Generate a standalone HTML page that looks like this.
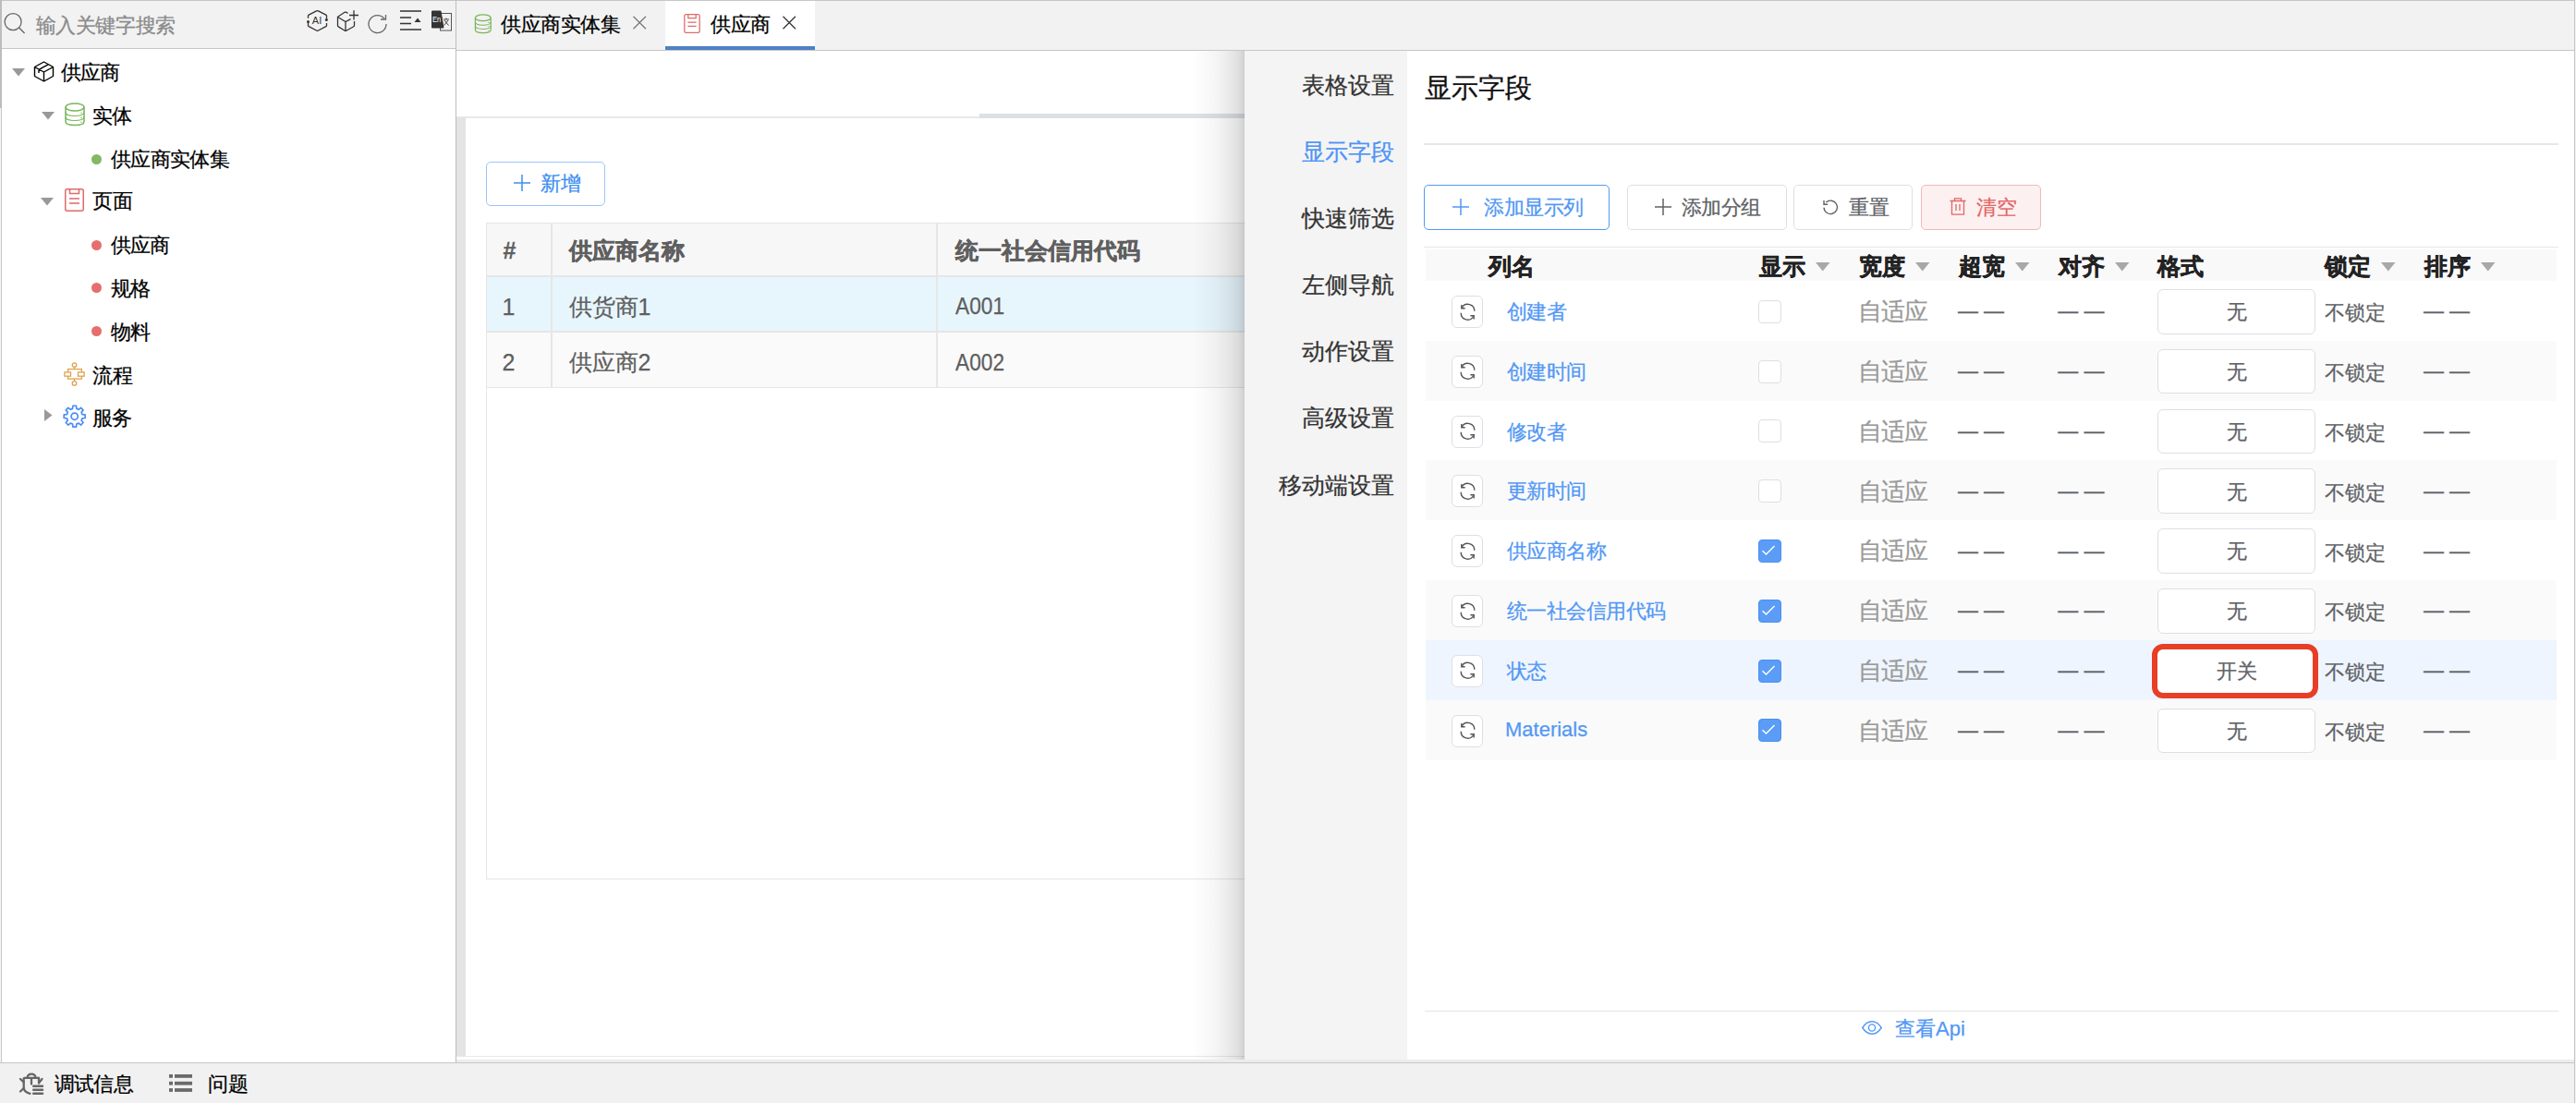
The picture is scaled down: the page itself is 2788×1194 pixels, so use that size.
<!DOCTYPE html><html><head><meta charset="utf-8"><style>
html,body{margin:0;padding:0;width:2788px;height:1194px;overflow:hidden;background:#fff;position:relative;font-family:"Liberation Sans",sans-serif}
.t{position:absolute;white-space:nowrap;line-height:1;-webkit-text-stroke:0.25px currentColor}
.r{position:absolute;box-sizing:border-box}
.i{position:absolute;overflow:visible}
</style></head><body>
<div class="r" style="left:0px;top:0px;width:2788px;height:1194px;background:#fff"></div>
<div class="r" style="left:0px;top:0px;width:493px;height:53px;background:#f2f2f2"></div>
<div class="r" style="left:0px;top:52px;width:493px;height:1px;background:#c6c6c6"></div>
<div class="r" style="left:494px;top:0px;width:2294px;height:55px;background:#f2f2f2"></div>
<div class="r" style="left:494px;top:54px;width:2294px;height:1px;background:#c6c6c6"></div>
<div class="r" style="left:0px;top:0px;width:2788px;height:1px;background:#c6c6c6"></div>
<div class="r" style="left:0px;top:0px;width:1px;height:1194px;background:#f4f4f4"></div>
<div class="r" style="left:1px;top:0px;width:1px;height:1194px;background:#c8c8c8"></div>
<div class="r" style="left:0px;top:0px;width:2px;height:117px;background:#bdbdbd"></div>
<div class="r" style="left:493px;top:0px;width:1px;height:1150px;background:#bdbdbd"></div>
<div class="r" style="left:0px;top:1150px;width:2788px;height:44px;background:#f1f1f1"></div>
<div class="r" style="left:0px;top:1150px;width:2788px;height:1px;background:#c6c6c6"></div>
<svg class="i" style="left:0px;top:0px;" width="40" height="52" viewBox="0 0 40 52"><circle cx="14.1" cy="23.6" r="9" fill="none" stroke="#666" stroke-width="1.3"/><line x1="20.6" y1="30" x2="26.6" y2="36" stroke="#666" stroke-width="1.3"/></svg>
<div class="t" style="left:38.5px;top:16.6px;font-size:22px;color:#8a8a8a;font-weight:400;letter-spacing:-0.35px">输入关键字搜索</div>
<svg class="i" style="left:332px;top:11px;" width="23" height="23" viewBox="0 0 23 23"><path d="M1.5 8.8 V6 Q1.5 5.5 2.2 5.1 L11 0.7 Q11.5 0.4 12 0.7 L20.8 5.1 Q21.5 5.5 21.5 6 V10.4 M21.5 14 V16.8 Q21.5 17.3 20.8 17.7 L12 22.2 Q11.5 22.5 11 22.2 L2.2 17.7 Q1.5 17.3 1.5 16.8 V12.5" fill="none" stroke="#333" stroke-width="1.3"/><circle cx="1.5" cy="12.5" r="1.5" fill="#333"/><circle cx="21.3" cy="10.4" r="1.5" fill="#333"/><text x="11" y="15.2" font-size="11" text-anchor="middle" fill="#333" font-family="Liberation Sans">AI</text></svg>
<svg class="i" style="left:365px;top:11px;" width="23" height="23" viewBox="0 0 23 23"><path d="M11.5 3.5 L10 2.3 Q9 1.8 8 2.3 L0.5 7.3 V16.8 Q0.5 17.5 1.2 17.9 L8.3 22.2 Q9 22.6 9.7 22.2 L17.8 17.7 Q18.5 17.3 18.5 16.5 V12" fill="none" stroke="#333" stroke-width="1.3"/><path d="M0.7 7.5 L9 12.6 L14.5 9.6 M9 12.6 V22.4" fill="none" stroke="#333" stroke-width="1.3"/><path d="M18 0.2 V10.5 M13 5.5 H23" stroke="#333" stroke-width="1.3"/></svg>
<svg class="i" style="left:398px;top:14.5px;" width="22" height="22" viewBox="0 0 22 22"><path d="M20 11 A9.5 9.5 0 1 1 18 5.2" fill="none" stroke="#666" stroke-width="1.3"/><path d="M19.5 1 V6 H14" fill="none" stroke="#666" stroke-width="1.3"/></svg>
<svg class="i" style="left:433px;top:11px;" width="23" height="22" viewBox="0 0 23 22"><path d="M0 1 H23 M0 8 H12 M0 14.5 H12 M0 21 H23" stroke="#333" stroke-width="1.4"/><path d="M15.5 13 L19 8.5 L22.5 13 Z" fill="#333"/></svg>
<svg class="i" style="left:466px;top:11px;" width="23" height="23" viewBox="0 0 23 23"><rect x="10.5" y="3.5" width="12" height="18.5" fill="#f2f2f2" stroke="#555" stroke-width="1"/><path d="M1.5 1 H11 L14 19 H1.5 Z" fill="#333" stroke="#333" stroke-width="1" stroke-linejoin="round"/><text x="6.6" y="13.2" font-size="9" fill="#fff" text-anchor="middle" font-family="Liberation Sans" transform="translate(6.6 0) scale(0.85 1) translate(-6.6 0)">En</text><path d="M14 10 H20 M17 8.5 V10 M15 11 L19.5 16.5 M19 11 L14.5 16.5" stroke="#333" stroke-width="0.9"/></svg>
<svg class="i" style="left:12.5px;top:74px;" width="14" height="9" viewBox="0 0 14 9"><path d="M0 0 H14 L7 8.5 Z" fill="#999"/></svg>
<svg class="i" style="left:36px;top:66px;" width="23" height="23" viewBox="0 0 23 23"><path d="M11.5 1 L21.5 6.5 V16.5 L11.5 22 L1.5 16.5 V6.5 Z M1.5 6.5 L11.5 12 L21.5 6.5 M11.5 12 V22 M6.5 9.2 L16.5 3.7 M6 9 V13" fill="none" stroke="#000" stroke-width="1.4" stroke-linejoin="round"/></svg>
<div class="t" style="left:65.7px;top:67.5px;font-size:22px;color:#000;font-weight:400;letter-spacing:-0.6px">供应商</div>
<svg class="i" style="left:44.5px;top:121px;" width="14" height="9" viewBox="0 0 14 9"><path d="M0 0 H14 L7 8.5 Z" fill="#999"/></svg>
<svg class="i" style="left:69.5px;top:111px;" width="22" height="25" viewBox="0 0 22 25"><ellipse cx="11" cy="5" rx="10" ry="4" fill="none" stroke="#7ab55c" stroke-width="1.5"/><path d="M1 5 V20.5 C1 23 5.5 24.5 11 24.5 C16.5 24.5 21 23 21 20.5 V5" fill="none" stroke="#7ab55c" stroke-width="1.5"/><path d="M1 10.5 C1 13 5.5 14.5 11 14.5 C16.5 14.5 21 13 21 10.5 M1 15.5 C1 18 5.5 19.5 11 19.5 C16.5 19.5 21 18 21 15.5" fill="none" stroke="#7ab55c" stroke-width="1.2"/><circle cx="18" cy="11.2" r="0.7" fill="#7ab55c"/><circle cx="18" cy="16.2" r="0.7" fill="#7ab55c"/><circle cx="18" cy="21.2" r="0.7" fill="#7ab55c"/></svg>
<div class="t" style="left:100px;top:114.8px;font-size:22px;color:#000;font-weight:400;letter-spacing:-0.6px">实体</div>
<div class="r" style="left:98.9px;top:166.5px;width:11px;height:11px;background:#82b866;border-radius:50%"></div>
<div class="t" style="left:119.8px;top:161.6px;font-size:22px;color:#000;font-weight:400;letter-spacing:-0.6px">供应商实体集</div>
<svg class="i" style="left:44px;top:214px;" width="14" height="9" viewBox="0 0 14 9"><path d="M0 0 H14 L7 8.5 Z" fill="#999"/></svg>
<svg class="i" style="left:70px;top:204px;" width="21" height="25" viewBox="0 0 21 25"><rect x="0.75" y="0.75" width="19.5" height="23.5" rx="2" fill="none" stroke="#e06a6a" stroke-width="1.5"/><path d="M5.5 1 V5.5 H15.5 V1" fill="none" stroke="#e06a6a" stroke-width="1.5"/><path d="M5 11 H16 M5 16 H16" stroke="#e06a6a" stroke-width="1.5"/></svg>
<div class="t" style="left:100.3px;top:207px;font-size:22px;color:#000;font-weight:400;letter-spacing:-0.6px">页面</div>
<div class="r" style="left:98.7px;top:259.5px;width:11px;height:11px;background:#e56f6f;border-radius:50%"></div>
<div class="t" style="left:119.7px;top:255.0px;font-size:22px;color:#000;font-weight:400;letter-spacing:-0.6px">供应商</div>
<div class="r" style="left:98.7px;top:306.4px;width:11px;height:11px;background:#e56f6f;border-radius:50%"></div>
<div class="t" style="left:119.7px;top:301.9px;font-size:22px;color:#000;font-weight:400;letter-spacing:-0.6px">规格</div>
<div class="r" style="left:98.7px;top:353.3px;width:11px;height:11px;background:#e56f6f;border-radius:50%"></div>
<div class="t" style="left:119.7px;top:348.8px;font-size:22px;color:#000;font-weight:400;letter-spacing:-0.6px">物料</div>
<svg class="i" style="left:69px;top:391.5px;" width="23" height="26" viewBox="0 0 23 26"><g fill="none" stroke="#dfa24c" stroke-width="1.3"><circle cx="11.5" cy="3.1" r="2.3"/><circle cx="11.5" cy="22.9" r="2.3"/><path d="M11.5 5.4 V7.6 M11.5 18.1 V20.6"/><rect x="4.6" y="7.6" width="14.8" height="10.5"/><rect x="0.9" y="10.9" width="6.6" height="4.3" fill="#fff"/><rect x="15.5" y="10.9" width="6.6" height="4.3" fill="#fff"/></g></svg>
<div class="t" style="left:100.3px;top:395.5px;font-size:22px;color:#000;font-weight:400;letter-spacing:-0.6px">流程</div>
<svg class="i" style="left:47.5px;top:443px;" width="9" height="13" viewBox="0 0 9 13"><path d="M0 0 V13 L8.5 6.5 Z" fill="#999"/></svg>
<svg class="i" style="left:67.6px;top:437.6px;" width="25.4" height="25.4" viewBox="0 0 25.4 25.4"><path d="M10.89 1.24 L14.51 1.24 L14.84 4.37 L17.08 5.30 L19.52 3.32 L22.08 5.88 L20.10 8.32 L21.03 10.56 L24.16 10.89 L24.16 14.51 L21.03 14.84 L20.10 17.08 L22.08 19.52 L19.52 22.08 L17.08 20.10 L14.84 21.03 L14.51 24.16 L10.89 24.16 L10.56 21.03 L8.32 20.10 L5.88 22.08 L3.32 19.52 L5.30 17.08 L4.37 14.84 L1.24 14.51 L1.24 10.89 L4.37 10.56 L5.30 8.32 L3.32 5.88 L5.88 3.32 L8.32 5.30 L10.56 4.37 Z" fill="none" stroke="#4a8ef2" stroke-width="1.7" stroke-linejoin="round"/><circle cx="12.7" cy="12.7" r="3.6" fill="none" stroke="#4a8ef2" stroke-width="1.7"/></svg>
<div class="t" style="left:100px;top:442.3px;font-size:22px;color:#000;font-weight:400;letter-spacing:-0.6px">服务</div>
<svg class="i" style="left:512.8px;top:15px;" width="19.6" height="21" viewBox="0 0 22 25"><ellipse cx="11" cy="5" rx="10" ry="4" fill="none" stroke="#7ab55c" stroke-width="1.5"/><path d="M1 5 V20.5 C1 23 5.5 24.5 11 24.5 C16.5 24.5 21 23 21 20.5 V5" fill="none" stroke="#7ab55c" stroke-width="1.5"/><path d="M1 10.5 C1 13 5.5 14.5 11 14.5 C16.5 14.5 21 13 21 10.5 M1 15.5 C1 18 5.5 19.5 11 19.5 C16.5 19.5 21 18 21 15.5" fill="none" stroke="#7ab55c" stroke-width="1.2"/><circle cx="18" cy="11.2" r="0.7" fill="#7ab55c"/><circle cx="18" cy="16.2" r="0.7" fill="#7ab55c"/><circle cx="18" cy="21.2" r="0.7" fill="#7ab55c"/></svg>
<div class="t" style="left:542px;top:15.5px;font-size:22px;color:#000;font-weight:400;letter-spacing:-0.45px">供应商实体集</div>
<svg class="i" style="left:685px;top:17px;" width="14.5" height="15" viewBox="0 0 14 14"><path d="M0.5 0.5 L13.5 13.5 M13.5 0.5 L0.5 13.5" stroke="#777" stroke-width="1.2"/></svg>
<div class="r" style="left:720px;top:1px;width:162px;height:53px;background:#fff"></div>
<div class="r" style="left:720px;top:50px;width:162px;height:4px;background:#4e80c4"></div>
<svg class="i" style="left:740px;top:15px;" width="18" height="21" viewBox="0 0 21 25"><rect x="0.75" y="0.75" width="19.5" height="23.5" rx="2" fill="none" stroke="#e06a6a" stroke-width="1.5"/><path d="M5.5 1 V5.5 H15.5 V1" fill="none" stroke="#e06a6a" stroke-width="1.5"/><path d="M5 11 H16 M5 16 H16" stroke="#e06a6a" stroke-width="1.5"/></svg>
<div class="t" style="left:769.2px;top:15.5px;font-size:22px;color:#000;font-weight:400;letter-spacing:-0.6px">供应商</div>
<svg class="i" style="left:846.7px;top:17px;" width="14.5" height="15" viewBox="0 0 14 14"><path d="M0.5 0.5 L13.5 13.5 M13.5 0.5 L0.5 13.5" stroke="#333" stroke-width="1.2"/></svg>
<div class="r" style="left:494px;top:126px;width:853px;height:1.5px;background:#ebe8e8"></div>
<div class="r" style="left:1060px;top:123px;width:287px;height:5px;background:#dde0e5"></div>
<div class="r" style="left:494px;top:127px;width:10px;height:1016px;background:#e4e4e4"></div>
<div class="r" style="left:494px;top:1143px;width:853px;height:1px;background:#e8e8e8"></div>
<div class="r" style="left:494px;top:1147px;width:853px;height:3px;background:#ececec"></div>
<div class="r" style="left:526px;top:175px;width:129px;height:47.5px;border:1px solid #9cc5f8;border-radius:5px;background:#fff"></div>
<svg class="i" style="left:556px;top:189px;" width="18" height="18" viewBox="0 0 18 18"><path d="M9 0 V18 M0 9 H18" stroke="#3d8ef0" stroke-width="1.5"/></svg>
<div class="t" style="left:585px;top:187.6px;font-size:22px;color:#3d8ef0;font-weight:400;">新增</div>
<div class="r" style="left:526px;top:241px;width:821px;height:711px;border-left:1px solid #e6e6e6;border-top:1px solid #e6e6e6;border-bottom:1px solid #e6e6e6"></div>
<div class="r" style="left:527px;top:242px;width:820px;height:56px;background:#f7f7f7"></div>
<div class="r" style="left:527px;top:298px;width:820px;height:1.5px;background:#e6e6e6"></div>
<div class="r" style="left:527px;top:299.5px;width:820px;height:58.5px;background:#e7f6fd"></div>
<div class="r" style="left:527px;top:358px;width:820px;height:1.5px;background:#e6e6e6"></div>
<div class="r" style="left:527px;top:359.5px;width:820px;height:59px;background:#fafafa"></div>
<div class="r" style="left:527px;top:418.5px;width:820px;height:1.5px;background:#e6e6e6"></div>
<div class="r" style="left:595.5px;top:242px;width:2px;height:177px;background:#e6e6e6"></div>
<div class="r" style="left:1012.5px;top:242px;width:2px;height:177px;background:#e6e6e6"></div>
<div class="t" style="left:544.4px;top:258.5px;font-size:25px;color:#5f5f5f;font-weight:700;-webkit-text-stroke:0.3px #5f5f5f">#</div>
<div class="t" style="left:615.8px;top:259px;font-size:25px;color:#5f5f5f;font-weight:700;-webkit-text-stroke:0.5px #5f5f5f">供应商名称</div>
<div class="t" style="left:1033.5px;top:259px;font-size:25px;color:#5f5f5f;font-weight:700;-webkit-text-stroke:0.5px #5f5f5f">统一社会信用代码</div>
<div class="t" style="left:543.5px;top:320px;font-size:25px;color:#5f5f5f;font-weight:400;">1</div>
<div class="t" style="left:615.6px;top:319.6px;font-size:25px;color:#5f5f5f;font-weight:400;">供货商1</div>
<div class="t" style="left:1033.5px;top:319.3px;font-size:25px;color:#5f5f5f;font-weight:400;transform:scaleX(0.91);transform-origin:0 0">A001</div>
<div class="t" style="left:543.5px;top:380.2px;font-size:25px;color:#5f5f5f;font-weight:400;">2</div>
<div class="t" style="left:615.6px;top:379.6px;font-size:25px;color:#5f5f5f;font-weight:400;">供应商2</div>
<div class="t" style="left:1033.5px;top:379.8px;font-size:25px;color:#5f5f5f;font-weight:400;transform:scaleX(0.91);transform-origin:0 0">A002</div>
<div class="r" style="left:1287px;top:55px;width:60px;height:1092px;background:linear-gradient(to right,rgba(0,0,0,0) 0%,rgba(0,0,0,0.004) 9.5%,rgba(0,0,0,0.035) 45%,rgba(0,0,0,0.07) 66.5%,rgba(0,0,0,0.12) 88%,rgba(0,0,0,0.19) 100%)"></div>
<div class="r" style="left:1347px;top:55px;width:1439px;height:1092px;background:#fff"></div>
<div class="r" style="left:1347px;top:55px;width:176px;height:1092px;background:#f4f4f4"></div>
<div class="t" style="right:1279px;top:80.2px;font-size:25px;color:#333">表格设置</div>
<div class="t" style="right:1279px;top:152.25px;font-size:25px;color:#4d94f5">显示字段</div>
<div class="t" style="right:1279px;top:224.3px;font-size:25px;color:#333">快速筛选</div>
<div class="t" style="right:1279px;top:296.34999999999997px;font-size:25px;color:#333">左侧导航</div>
<div class="t" style="right:1279px;top:368.4px;font-size:25px;color:#333">动作设置</div>
<div class="t" style="right:1279px;top:440.45px;font-size:25px;color:#333">高级设置</div>
<div class="t" style="right:1279px;top:512.5px;font-size:25px;color:#333">移动端设置</div>
<div class="t" style="left:1541.8px;top:80.5px;font-size:29px;color:#111;font-weight:400;">显示字段</div>
<div class="r" style="left:1541px;top:154.5px;width:1228px;height:2px;background:#e4e7ed"></div>
<div class="r" style="left:1541px;top:200px;width:201px;height:48.6px;border:1.5px solid #5298f5;border-radius:5px"></div>
<svg class="i" style="left:1572px;top:215px;" width="18" height="18" viewBox="0 0 18 18"><path d="M9 0 V18 M0 9 H18" stroke="#5298f5" stroke-width="1.5"/></svg>
<div class="t" style="left:1606px;top:214px;font-size:22px;color:#5298f5;font-weight:400;letter-spacing:-0.45px">添加显示列</div>
<div class="r" style="left:1761px;top:200px;width:172.5px;height:48.6px;border:1px solid #dcdfe6;border-radius:5px"></div>
<svg class="i" style="left:1791px;top:215px;" width="18" height="18" viewBox="0 0 18 18"><path d="M9 0 V18 M0 9 H18" stroke="#606266" stroke-width="1.5"/></svg>
<div class="t" style="left:1820px;top:214px;font-size:22px;color:#606266;font-weight:400;letter-spacing:-0.75px">添加分组</div>
<div class="r" style="left:1941.4px;top:200px;width:129px;height:48.6px;border:1px solid #dcdfe6;border-radius:5px"></div>
<svg class="i" style="left:1972.5px;top:215.5px;" width="16.5" height="16.5" viewBox="0 0 16 16"><path d="M3.2 3 A7 7 0 1 1 1 8.5" fill="none" stroke="#606266" stroke-width="1.4"/><path d="M1 1 V5 H5" fill="none" stroke="#606266" stroke-width="1.4"/></svg>
<div class="t" style="left:2000.6px;top:214px;font-size:22px;color:#606266;font-weight:400;">重置</div>
<div class="r" style="left:2079px;top:200px;width:129.5px;height:48.6px;border:1px solid #f2b8b8;border-radius:5px;background:#fcf0f0"></div>
<svg class="i" style="left:2109.5px;top:214px;" width="18" height="19" viewBox="0 0 18 19"><path d="M0.5 3.5 H17.5 M5.5 3.5 V0.8 H12.5 V3.5 M2.5 3.5 V18.2 H15.5 V3.5 M7 7 V14 M11 7 V14" fill="none" stroke="#e36565" stroke-width="1.3"/></svg>
<div class="t" style="left:2138.5px;top:214px;font-size:22px;color:#e36565;font-weight:400;">清空</div>
<div class="r" style="left:1541px;top:267px;width:1228px;height:1px;background:#e4e7ed"></div>
<div class="r" style="left:1543px;top:269.5px;width:1224px;height:34.5px;background:#f9f9fa"></div>
<div class="t" style="left:1610.5px;top:276.2px;font-size:25px;color:#222;font-weight:700;-webkit-text-stroke:0.5px #222">列名</div>
<div class="t" style="left:1904.2px;top:276.2px;font-size:25px;color:#222;font-weight:700;-webkit-text-stroke:0.5px #222">显示</div>
<svg class="i" style="left:1965.2px;top:284.2px;" width="15.5" height="9.5" viewBox="0 0 15.5 9.5"><path d="M0 0 H15.5 L7.75 9.5 Z" fill="#a8a8a8"/></svg>
<div class="t" style="left:2011.7px;top:276.2px;font-size:25px;color:#222;font-weight:700;-webkit-text-stroke:0.5px #222">宽度</div>
<svg class="i" style="left:2072.7px;top:284.2px;" width="15.5" height="9.5" viewBox="0 0 15.5 9.5"><path d="M0 0 H15.5 L7.75 9.5 Z" fill="#a8a8a8"/></svg>
<div class="t" style="left:2119.8px;top:276.2px;font-size:25px;color:#222;font-weight:700;-webkit-text-stroke:0.5px #222">超宽</div>
<svg class="i" style="left:2180.8px;top:284.2px;" width="15.5" height="9.5" viewBox="0 0 15.5 9.5"><path d="M0 0 H15.5 L7.75 9.5 Z" fill="#a8a8a8"/></svg>
<div class="t" style="left:2228px;top:276.2px;font-size:25px;color:#222;font-weight:700;-webkit-text-stroke:0.5px #222">对齐</div>
<svg class="i" style="left:2289px;top:284.2px;" width="15.5" height="9.5" viewBox="0 0 15.5 9.5"><path d="M0 0 H15.5 L7.75 9.5 Z" fill="#a8a8a8"/></svg>
<div class="t" style="left:2335.4px;top:276.2px;font-size:25px;color:#222;font-weight:700;-webkit-text-stroke:0.5px #222">格式</div>
<div class="t" style="left:2515.5px;top:276.2px;font-size:25px;color:#222;font-weight:700;-webkit-text-stroke:0.5px #222">锁定</div>
<svg class="i" style="left:2576.5px;top:284.2px;" width="15.5" height="9.5" viewBox="0 0 15.5 9.5"><path d="M0 0 H15.5 L7.75 9.5 Z" fill="#a8a8a8"/></svg>
<div class="t" style="left:2623.6px;top:276.2px;font-size:25px;color:#222;font-weight:700;-webkit-text-stroke:0.5px #222">排序</div>
<svg class="i" style="left:2684.6px;top:284.2px;" width="15.5" height="9.5" viewBox="0 0 15.5 9.5"><path d="M0 0 H15.5 L7.75 9.5 Z" fill="#a8a8a8"/></svg>
<div class="r" style="left:1543px;top:304.0px;width:1224px;height:65.3px;background:#fff"></div>
<div class="r" style="left:1571px;top:319.9px;width:34px;height:35px;border:1px solid #dcdfe6;border-radius:6px;background:#fff"></div>
<svg class="i" style="left:1579.5px;top:328.5px;" width="17" height="17.5" viewBox="0 0 17 17.5"><path d="M2.2 4 A7.3 7.3 0 0 1 15.8 7.8" fill="none" stroke="#555" stroke-width="1.4"/><path d="M14.8 13.5 A7.3 7.3 0 0 1 1.2 9.7" fill="none" stroke="#555" stroke-width="1.4"/><path d="M1.8 1 V4.8 H5.6" fill="none" stroke="#555" stroke-width="1.4"/><path d="M15.2 16.5 V12.7 H11.4" fill="none" stroke="#555" stroke-width="1.4"/></svg>
<div class="t" style="left:1630.6px;top:326.9px;font-size:22px;color:#5298f5;font-weight:400;letter-spacing:-0.45px">创建者</div>
<div class="r" style="left:1903px;top:324.7px;width:25px;height:25px;background:#fff;border:1px solid #dcdfe6;border-radius:4px"></div>
<div class="t" style="left:2010.5px;top:325.2px;font-size:25.5px;color:#9a9a9a;font-weight:400;letter-spacing:-0.8px">自适应</div>
<div class="t" style="left:2119px;top:326.4px;font-size:22px;color:#606266;font-weight:400;">— —</div>
<div class="t" style="left:2227.3px;top:326.4px;font-size:22px;color:#606266;font-weight:400;">— —</div>
<div class="t" style="left:2623px;top:326.4px;font-size:22px;color:#606266;font-weight:400;">— —</div>
<div class="r" style="left:2335.4px;top:312.9px;width:170.2px;height:48.7px;border:1px solid #dcdfe6;border-radius:6px;background:#fff"></div>
<div class="t" style="left:2410px;top:327.2px;font-size:22px;color:#606266;font-weight:400;">无</div>
<div class="t" style="left:2515.5px;top:328.4px;font-size:22px;color:#606266;font-weight:400;">不锁定</div>
<div class="r" style="left:1543px;top:368.8px;width:1224px;height:65.3px;background:#fafafa"></div>
<div class="r" style="left:1571px;top:384.7px;width:34px;height:35px;border:1px solid #dcdfe6;border-radius:6px;background:#fff"></div>
<svg class="i" style="left:1579.5px;top:393.3px;" width="17" height="17.5" viewBox="0 0 17 17.5"><path d="M2.2 4 A7.3 7.3 0 0 1 15.8 7.8" fill="none" stroke="#555" stroke-width="1.4"/><path d="M14.8 13.5 A7.3 7.3 0 0 1 1.2 9.7" fill="none" stroke="#555" stroke-width="1.4"/><path d="M1.8 1 V4.8 H5.6" fill="none" stroke="#555" stroke-width="1.4"/><path d="M15.2 16.5 V12.7 H11.4" fill="none" stroke="#555" stroke-width="1.4"/></svg>
<div class="t" style="left:1630.6px;top:391.7px;font-size:22px;color:#5298f5;font-weight:400;letter-spacing:-0.45px">创建时间</div>
<div class="r" style="left:1903px;top:389.5px;width:25px;height:25px;background:#fff;border:1px solid #dcdfe6;border-radius:4px"></div>
<div class="t" style="left:2010.5px;top:390.0px;font-size:25.5px;color:#9a9a9a;font-weight:400;letter-spacing:-0.8px">自适应</div>
<div class="t" style="left:2119px;top:391.2px;font-size:22px;color:#606266;font-weight:400;">— —</div>
<div class="t" style="left:2227.3px;top:391.2px;font-size:22px;color:#606266;font-weight:400;">— —</div>
<div class="t" style="left:2623px;top:391.2px;font-size:22px;color:#606266;font-weight:400;">— —</div>
<div class="r" style="left:2335.4px;top:377.7px;width:170.2px;height:48.7px;border:1px solid #dcdfe6;border-radius:6px;background:#fff"></div>
<div class="t" style="left:2410px;top:392.0px;font-size:22px;color:#606266;font-weight:400;">无</div>
<div class="t" style="left:2515.5px;top:393.2px;font-size:22px;color:#606266;font-weight:400;">不锁定</div>
<div class="r" style="left:1543px;top:433.6px;width:1224px;height:65.3px;background:#fff"></div>
<div class="r" style="left:1571px;top:449.5px;width:34px;height:35px;border:1px solid #dcdfe6;border-radius:6px;background:#fff"></div>
<svg class="i" style="left:1579.5px;top:458.1px;" width="17" height="17.5" viewBox="0 0 17 17.5"><path d="M2.2 4 A7.3 7.3 0 0 1 15.8 7.8" fill="none" stroke="#555" stroke-width="1.4"/><path d="M14.8 13.5 A7.3 7.3 0 0 1 1.2 9.7" fill="none" stroke="#555" stroke-width="1.4"/><path d="M1.8 1 V4.8 H5.6" fill="none" stroke="#555" stroke-width="1.4"/><path d="M15.2 16.5 V12.7 H11.4" fill="none" stroke="#555" stroke-width="1.4"/></svg>
<div class="t" style="left:1630.6px;top:456.5px;font-size:22px;color:#5298f5;font-weight:400;letter-spacing:-0.45px">修改者</div>
<div class="r" style="left:1903px;top:454.3px;width:25px;height:25px;background:#fff;border:1px solid #dcdfe6;border-radius:4px"></div>
<div class="t" style="left:2010.5px;top:454.8px;font-size:25.5px;color:#9a9a9a;font-weight:400;letter-spacing:-0.8px">自适应</div>
<div class="t" style="left:2119px;top:456.0px;font-size:22px;color:#606266;font-weight:400;">— —</div>
<div class="t" style="left:2227.3px;top:456.0px;font-size:22px;color:#606266;font-weight:400;">— —</div>
<div class="t" style="left:2623px;top:456.0px;font-size:22px;color:#606266;font-weight:400;">— —</div>
<div class="r" style="left:2335.4px;top:442.5px;width:170.2px;height:48.7px;border:1px solid #dcdfe6;border-radius:6px;background:#fff"></div>
<div class="t" style="left:2410px;top:456.8px;font-size:22px;color:#606266;font-weight:400;">无</div>
<div class="t" style="left:2515.5px;top:458.0px;font-size:22px;color:#606266;font-weight:400;">不锁定</div>
<div class="r" style="left:1543px;top:498.4px;width:1224px;height:65.3px;background:#fafafa"></div>
<div class="r" style="left:1571px;top:514.3px;width:34px;height:35px;border:1px solid #dcdfe6;border-radius:6px;background:#fff"></div>
<svg class="i" style="left:1579.5px;top:522.8999999999999px;" width="17" height="17.5" viewBox="0 0 17 17.5"><path d="M2.2 4 A7.3 7.3 0 0 1 15.8 7.8" fill="none" stroke="#555" stroke-width="1.4"/><path d="M14.8 13.5 A7.3 7.3 0 0 1 1.2 9.7" fill="none" stroke="#555" stroke-width="1.4"/><path d="M1.8 1 V4.8 H5.6" fill="none" stroke="#555" stroke-width="1.4"/><path d="M15.2 16.5 V12.7 H11.4" fill="none" stroke="#555" stroke-width="1.4"/></svg>
<div class="t" style="left:1630.6px;top:521.3px;font-size:22px;color:#5298f5;font-weight:400;letter-spacing:-0.45px">更新时间</div>
<div class="r" style="left:1903px;top:519.0999999999999px;width:25px;height:25px;background:#fff;border:1px solid #dcdfe6;border-radius:4px"></div>
<div class="t" style="left:2010.5px;top:519.5999999999999px;font-size:25.5px;color:#9a9a9a;font-weight:400;letter-spacing:-0.8px">自适应</div>
<div class="t" style="left:2119px;top:520.8px;font-size:22px;color:#606266;font-weight:400;">— —</div>
<div class="t" style="left:2227.3px;top:520.8px;font-size:22px;color:#606266;font-weight:400;">— —</div>
<div class="t" style="left:2623px;top:520.8px;font-size:22px;color:#606266;font-weight:400;">— —</div>
<div class="r" style="left:2335.4px;top:507.2999999999999px;width:170.2px;height:48.7px;border:1px solid #dcdfe6;border-radius:6px;background:#fff"></div>
<div class="t" style="left:2410px;top:521.5999999999999px;font-size:22px;color:#606266;font-weight:400;">无</div>
<div class="t" style="left:2515.5px;top:522.8px;font-size:22px;color:#606266;font-weight:400;">不锁定</div>
<div class="r" style="left:1543px;top:563.2px;width:1224px;height:65.3px;background:#fff"></div>
<div class="r" style="left:1571px;top:579.1px;width:34px;height:35px;border:1px solid #dcdfe6;border-radius:6px;background:#fff"></div>
<svg class="i" style="left:1579.5px;top:587.6999999999999px;" width="17" height="17.5" viewBox="0 0 17 17.5"><path d="M2.2 4 A7.3 7.3 0 0 1 15.8 7.8" fill="none" stroke="#555" stroke-width="1.4"/><path d="M14.8 13.5 A7.3 7.3 0 0 1 1.2 9.7" fill="none" stroke="#555" stroke-width="1.4"/><path d="M1.8 1 V4.8 H5.6" fill="none" stroke="#555" stroke-width="1.4"/><path d="M15.2 16.5 V12.7 H11.4" fill="none" stroke="#555" stroke-width="1.4"/></svg>
<div class="t" style="left:1630.6px;top:586.1px;font-size:22px;color:#5298f5;font-weight:400;letter-spacing:-0.45px">供应商名称</div>
<div class="r" style="left:1903px;top:583.9px;width:25px;height:25px;background:#5b9cf6;border:1px solid #4a90f2;border-radius:4px"></div>
<svg class="i" style="left:1903px;top:583.9px;" width="25" height="25" viewBox="0 0 25 25"><path d="M4.5 12.2 L8.5 16 L17.5 7" fill="none" stroke="#fff" stroke-width="1.4"/></svg>
<div class="t" style="left:2010.5px;top:584.4px;font-size:25.5px;color:#9a9a9a;font-weight:400;letter-spacing:-0.8px">自适应</div>
<div class="t" style="left:2119px;top:585.6px;font-size:22px;color:#606266;font-weight:400;">— —</div>
<div class="t" style="left:2227.3px;top:585.6px;font-size:22px;color:#606266;font-weight:400;">— —</div>
<div class="t" style="left:2623px;top:585.6px;font-size:22px;color:#606266;font-weight:400;">— —</div>
<div class="r" style="left:2335.4px;top:572.1px;width:170.2px;height:48.7px;border:1px solid #dcdfe6;border-radius:6px;background:#fff"></div>
<div class="t" style="left:2410px;top:586.4px;font-size:22px;color:#606266;font-weight:400;">无</div>
<div class="t" style="left:2515.5px;top:587.6px;font-size:22px;color:#606266;font-weight:400;">不锁定</div>
<div class="r" style="left:1543px;top:628.0px;width:1224px;height:65.3px;background:#fafafa"></div>
<div class="r" style="left:1571px;top:643.9px;width:34px;height:35px;border:1px solid #dcdfe6;border-radius:6px;background:#fff"></div>
<svg class="i" style="left:1579.5px;top:652.4999999999999px;" width="17" height="17.5" viewBox="0 0 17 17.5"><path d="M2.2 4 A7.3 7.3 0 0 1 15.8 7.8" fill="none" stroke="#555" stroke-width="1.4"/><path d="M14.8 13.5 A7.3 7.3 0 0 1 1.2 9.7" fill="none" stroke="#555" stroke-width="1.4"/><path d="M1.8 1 V4.8 H5.6" fill="none" stroke="#555" stroke-width="1.4"/><path d="M15.2 16.5 V12.7 H11.4" fill="none" stroke="#555" stroke-width="1.4"/></svg>
<div class="t" style="left:1630.6px;top:650.9px;font-size:22px;color:#5298f5;font-weight:400;letter-spacing:-0.45px">统一社会信用代码</div>
<div class="r" style="left:1903px;top:648.6999999999999px;width:25px;height:25px;background:#5b9cf6;border:1px solid #4a90f2;border-radius:4px"></div>
<svg class="i" style="left:1903px;top:648.6999999999999px;" width="25" height="25" viewBox="0 0 25 25"><path d="M4.5 12.2 L8.5 16 L17.5 7" fill="none" stroke="#fff" stroke-width="1.4"/></svg>
<div class="t" style="left:2010.5px;top:649.1999999999999px;font-size:25.5px;color:#9a9a9a;font-weight:400;letter-spacing:-0.8px">自适应</div>
<div class="t" style="left:2119px;top:650.4px;font-size:22px;color:#606266;font-weight:400;">— —</div>
<div class="t" style="left:2227.3px;top:650.4px;font-size:22px;color:#606266;font-weight:400;">— —</div>
<div class="t" style="left:2623px;top:650.4px;font-size:22px;color:#606266;font-weight:400;">— —</div>
<div class="r" style="left:2335.4px;top:636.9px;width:170.2px;height:48.7px;border:1px solid #dcdfe6;border-radius:6px;background:#fff"></div>
<div class="t" style="left:2410px;top:651.1999999999999px;font-size:22px;color:#606266;font-weight:400;">无</div>
<div class="t" style="left:2515.5px;top:652.4px;font-size:22px;color:#606266;font-weight:400;">不锁定</div>
<div class="r" style="left:1543px;top:692.8px;width:1224px;height:65.3px;background:#eef5fe"></div>
<div class="r" style="left:1571px;top:708.6999999999999px;width:34px;height:35px;border:1px solid #dcdfe6;border-radius:6px;background:#fff"></div>
<svg class="i" style="left:1579.5px;top:717.2999999999998px;" width="17" height="17.5" viewBox="0 0 17 17.5"><path d="M2.2 4 A7.3 7.3 0 0 1 15.8 7.8" fill="none" stroke="#555" stroke-width="1.4"/><path d="M14.8 13.5 A7.3 7.3 0 0 1 1.2 9.7" fill="none" stroke="#555" stroke-width="1.4"/><path d="M1.8 1 V4.8 H5.6" fill="none" stroke="#555" stroke-width="1.4"/><path d="M15.2 16.5 V12.7 H11.4" fill="none" stroke="#555" stroke-width="1.4"/></svg>
<div class="t" style="left:1630.6px;top:715.6999999999999px;font-size:22px;color:#5298f5;font-weight:400;letter-spacing:-0.45px">状态</div>
<div class="r" style="left:1903px;top:713.4999999999999px;width:25px;height:25px;background:#5b9cf6;border:1px solid #4a90f2;border-radius:4px"></div>
<svg class="i" style="left:1903px;top:713.4999999999999px;" width="25" height="25" viewBox="0 0 25 25"><path d="M4.5 12.2 L8.5 16 L17.5 7" fill="none" stroke="#fff" stroke-width="1.4"/></svg>
<div class="t" style="left:2010.5px;top:713.9999999999999px;font-size:25.5px;color:#9a9a9a;font-weight:400;letter-spacing:-0.8px">自适应</div>
<div class="t" style="left:2119px;top:715.1999999999999px;font-size:22px;color:#606266;font-weight:400;">— —</div>
<div class="t" style="left:2227.3px;top:715.1999999999999px;font-size:22px;color:#606266;font-weight:400;">— —</div>
<div class="t" style="left:2623px;top:715.1999999999999px;font-size:22px;color:#606266;font-weight:400;">— —</div>
<div class="r" style="left:2329.3px;top:696.4999999999999px;width:180px;height:59.5px;border:6px solid #e83e26;border-radius:12px;background:#fff"></div>
<div class="t" style="left:2399.3px;top:715.6999999999999px;font-size:22px;color:#606266;font-weight:400;">开关</div>
<div class="t" style="left:2515.5px;top:717.1999999999999px;font-size:22px;color:#606266;font-weight:400;">不锁定</div>
<div class="r" style="left:1543px;top:757.5999999999999px;width:1224px;height:65.3px;background:#fafafa"></div>
<div class="r" style="left:1571px;top:773.4999999999999px;width:34px;height:35px;border:1px solid #dcdfe6;border-radius:6px;background:#fff"></div>
<svg class="i" style="left:1579.5px;top:782.0999999999998px;" width="17" height="17.5" viewBox="0 0 17 17.5"><path d="M2.2 4 A7.3 7.3 0 0 1 15.8 7.8" fill="none" stroke="#555" stroke-width="1.4"/><path d="M14.8 13.5 A7.3 7.3 0 0 1 1.2 9.7" fill="none" stroke="#555" stroke-width="1.4"/><path d="M1.8 1 V4.8 H5.6" fill="none" stroke="#555" stroke-width="1.4"/><path d="M15.2 16.5 V12.7 H11.4" fill="none" stroke="#555" stroke-width="1.4"/></svg>
<div class="t" style="left:1629px;top:779.2999999999998px;font-size:22px;color:#5298f5;font-weight:400;">Materials</div>
<div class="r" style="left:1903px;top:778.2999999999998px;width:25px;height:25px;background:#5b9cf6;border:1px solid #4a90f2;border-radius:4px"></div>
<svg class="i" style="left:1903px;top:778.2999999999998px;" width="25" height="25" viewBox="0 0 25 25"><path d="M4.5 12.2 L8.5 16 L17.5 7" fill="none" stroke="#fff" stroke-width="1.4"/></svg>
<div class="t" style="left:2010.5px;top:778.7999999999998px;font-size:25.5px;color:#9a9a9a;font-weight:400;letter-spacing:-0.8px">自适应</div>
<div class="t" style="left:2119px;top:779.9999999999999px;font-size:22px;color:#606266;font-weight:400;">— —</div>
<div class="t" style="left:2227.3px;top:779.9999999999999px;font-size:22px;color:#606266;font-weight:400;">— —</div>
<div class="t" style="left:2623px;top:779.9999999999999px;font-size:22px;color:#606266;font-weight:400;">— —</div>
<div class="r" style="left:2335.4px;top:766.4999999999999px;width:170.2px;height:48.7px;border:1px solid #dcdfe6;border-radius:6px;background:#fff"></div>
<div class="t" style="left:2410px;top:780.7999999999998px;font-size:22px;color:#606266;font-weight:400;">无</div>
<div class="t" style="left:2515.5px;top:781.9999999999999px;font-size:22px;color:#606266;font-weight:400;">不锁定</div>
<div class="r" style="left:1541.5px;top:1094px;width:1227.5px;height:1px;background:#e4e4e4"></div>
<svg class="i" style="left:2014.5px;top:1105px;" width="22" height="15" viewBox="0 0 22 15"><path d="M0.8 7.5 C4 2.5 7.5 0.8 11 0.8 C14.5 0.8 18 2.5 21.2 7.5 C18 12.5 14.5 14.2 11 14.2 C7.5 14.2 4 12.5 0.8 7.5 Z" fill="none" stroke="#5298f5" stroke-width="1.4"/><circle cx="11" cy="7.5" r="3.6" fill="none" stroke="#5298f5" stroke-width="1.4"/></svg>
<div class="t" style="left:2051px;top:1102.5px;font-size:22px;color:#5298f5;font-weight:400;">查看Api</div>
<svg class="i" style="left:15px;top:1155px;" width="40" height="35" viewBox="0 0 40 35"><g fill="none" stroke="#666" stroke-width="2.3" stroke-linecap="round"><path d="M14.5 11.5 A4.6 4.6 0 0 1 23.6 11.5"/><path d="M11.5 11.8 H27"/><path d="M7 13 L10.7 16.5"/><path d="M10.7 12.5 V22 C10.7 25.5 13 27.8 17.5 28.8"/><path d="M7 26.5 L10.7 23"/><path d="M30.5 13 L27.3 17"/><path d="M27 12 V17.5"/><path d="M19 12.5 V18.5"/></g><path d="M21.3 20.7 H31 M21.3 24.7 H31 M21.3 28.7 H31" stroke="#666" stroke-width="2.6" stroke-linecap="round"/></svg>
<div class="t" style="left:58.7px;top:1163px;font-size:22px;color:#000;font-weight:400;letter-spacing:-0.6px">调试信息</div>
<svg class="i" style="left:178px;top:1158px;" width="34" height="30" viewBox="0 0 34 30"><g fill="#6a6a6a"><rect x="5" y="5" width="4" height="3.8"/><rect x="11" y="5" width="19" height="3.8"/><rect x="5" y="12.8" width="4" height="3.8"/><rect x="11" y="12.8" width="19" height="3.8"/><rect x="5" y="20.1" width="4" height="3.8"/><rect x="11" y="20.1" width="19" height="3.8"/></g></svg>
<div class="t" style="left:225px;top:1163px;font-size:22px;color:#000;font-weight:400;">问题</div>
<div class="r" style="left:494px;top:1147px;width:2292px;height:3px;background:#ececec"></div>
<div class="r" style="left:0px;top:1150px;width:2788px;height:1px;background:#c6c6c6"></div>
<div class="r" style="left:2786px;top:0px;width:1px;height:1194px;background:#c4c4c4"></div>
<div class="r" style="left:2787px;top:0px;width:1px;height:1194px;background:#f4f4f4"></div>
</body></html>
